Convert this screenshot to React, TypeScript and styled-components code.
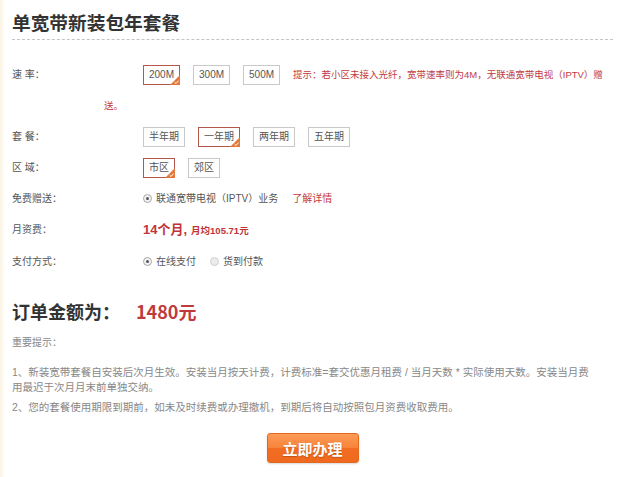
import React from "react";
import styled, { createGlobalStyle } from "styled-components";

const Global = createGlobalStyle`
  html, body { margin: 0; padding: 0; background: #fff; }
  body { font-family: "Liberation Sans", "Noto Sans CJK SC", sans-serif; color: #555; }
`;

const Page = styled.div`
  width: 640px;
  height: 477px;
  box-sizing: border-box;
  padding: 0 27px 0 12px;
  background: linear-gradient(to right, #fbf4e4 0, #fdf9f0 3px, #fff 5px);
  overflow: hidden;
`;

const Title = styled.h1`
  margin: 0;
  padding: 10px 0 5px;
  font-size: 18.7px;
  line-height: 24px;
  font-weight: 700;
  color: #333;
  font-family: "Noto Sans CJK SC", sans-serif;
  border-bottom: 1px dashed #c4c4c4;
`;

const Form = styled.div`
  margin-top: 19px;
`;

const Row = styled.div`
  padding-left: 92px;
  line-height: 31px;
  font-size: 10px;
`;

const Label = styled.span`
  display: inline-block;
  width: 131px;
  margin-left: -92px;
  color: #555;
  vertical-align: top;
`;

const Option = styled.span<{ $active?: boolean }>`
  position: relative;
  display: inline-block;
  box-sizing: border-box;
  height: 20px;
  line-height: 18px;
  padding: 0 5px;
  margin-right: 13px;
  border: 1px solid ${(p) => (p.$active ? "#b4574c" : "#c9c9c9")};
  color: #555;
  vertical-align: middle;
  background: #fff;
`;

const Badge = styled.svg`
  position: absolute;
  right: -1px;
  bottom: -1px;
  width: 10px;
  height: 10px;
`;

const Hint = styled.span`
  color: #c23a3f;
  font-size: 9.5px;
`;

const Radio = styled.span<{ $checked?: boolean }>`
  position: relative;
  display: inline-block;
  box-sizing: border-box;
  width: 9px;
  height: 9px;
  border-radius: 50%;
  border: 1px solid ${(p) => (p.$checked ? "#a8a8a8" : "#cfcfcf")};
  background: ${(p) => (p.$checked ? "#f2f2f2" : "#ececec")};
  vertical-align: middle;
  margin: -2px 4px 0 0;
  &::after {
    content: "";
    display: ${(p) => (p.$checked ? "block" : "none")};
    position: absolute;
    left: 2px;
    top: 2px;
    width: 3px;
    height: 3px;
    border-radius: 50%;
    background: #555;
  }
`;

const Choice = styled.span`
  margin-right: 14px;
  color: #555;
`;

const Link = styled.span`
  margin-left: 14px;
  color: #c23a3f;
`;

const Months = styled.span`
  color: #c0343a;
  font-weight: 700;
  font-size: 13px;
  margin-right: 4px;
`;

const Avg = styled.span`
  color: #c0343a;
  font-weight: 700;
  font-size: 9.5px;
`;

const Total = styled.div`
  margin-top: 20px;
  font-size: 18px;
  line-height: 28px;
  font-weight: 700;
  color: #333;
  font-family: "Noto Sans CJK SC", sans-serif;
`;

const Amount = styled.span`
  color: #bf3b3b;
  margin-left: 16px;
`;

const NoteTitle = styled.p`
  margin: 10px 0 0;
  font-size: 10px;
  line-height: 15px;
  color: #888;
`;

const Note = styled.p<{ $gap: number }>`
  margin: ${(p) => p.$gap}px 0 0;
  width: 585px;
  font-size: 10.5px;
  line-height: 15px;
  color: #888;
`;

const Actions = styled.div`
  display: flex;
  justify-content: center;
  margin-top: 18px;
`;

const Submit = styled.button`
  width: 92px;
  height: 30px;
  padding: 0;
  border: 1px solid #e4691f;
  border-radius: 3px;
  background: linear-gradient(#fc9b57, #f7833a 50%, #f26d22 51%, #ef6a1f);
  color: #fff;
  font-family: "Noto Sans CJK SC", sans-serif;
  font-weight: 700;
  font-size: 15px;
  text-shadow: 0 1px 1px rgba(150, 60, 0, 0.5);
  box-shadow: 0 1px 2px rgba(0, 0, 0, 0.15);
`;

const Check = () => (
  <Badge viewBox="0 0 10 10">
    <polygon points="10,0 10,10 0,10" fill="#e2793a" />
    <path d="M4.6 7.2 L6 8.5 L8.6 5.6" stroke="#fff" strokeWidth="1" fill="none" />
  </Badge>
);

const Opt = ({ children, active }: { children: React.ReactNode; active?: boolean }) => (
  <Option $active={active}>
    {children}
    {active && <Check />}
  </Option>
);

export default function App() {
  return (
    <>
      <Global />
      <Page>
        <Title>单宽带新装包年套餐</Title>
        <Form>
          <Row>
            <Label>速 率：</Label>
            <Opt active>200M</Opt>
            <Opt>300M</Opt>
            <Opt>500M</Opt>
            <Hint>提示：若小区未接入光纤，宽带速率则为4M，无联通宽带电视（IPTV）赠送。</Hint>
          </Row>
          <Row>
            <Label>套 餐：</Label>
            <Opt>半年期</Opt>
            <Opt active>一年期</Opt>
            <Opt>两年期</Opt>
            <Opt>五年期</Opt>
          </Row>
          <Row>
            <Label>区 域：</Label>
            <Opt active>市区</Opt>
            <Opt>郊区</Opt>
          </Row>
          <Row>
            <Label>免费赠送：</Label>
            <Radio $checked />
            <span>联通宽带电视（IPTV）业务</span>
            <Link>了解详情</Link>
          </Row>
          <Row>
            <Label>月资费：</Label>
            <Months>14个月,</Months>
            <Avg>月均105.71元</Avg>
          </Row>
          <Row>
            <Label>支付方式：</Label>
            <Radio $checked />
            <Choice>在线支付</Choice>
            <Radio />
            <Choice>货到付款</Choice>
          </Row>
        </Form>
        <Total>
          订单金额为：<Amount>1480元</Amount>
        </Total>
        <NoteTitle>重要提示：</NoteTitle>
        <Note $gap={15}>
          1、新装宽带套餐自安装后次月生效。安装当月按天计费，计费标准=套交优惠月租费 / 当月天数 * 实际使用天数。安装当月费用最迟于次月月末前单独交纳。
        </Note>
        <Note $gap={5}>2、您的套餐使用期限到期前，如未及时续费或办理撤机，到期后将自动按照包月资费收取费用。</Note>
        <Actions>
          <Submit>立即办理</Submit>
        </Actions>
      </Page>
    </>
  );
}
